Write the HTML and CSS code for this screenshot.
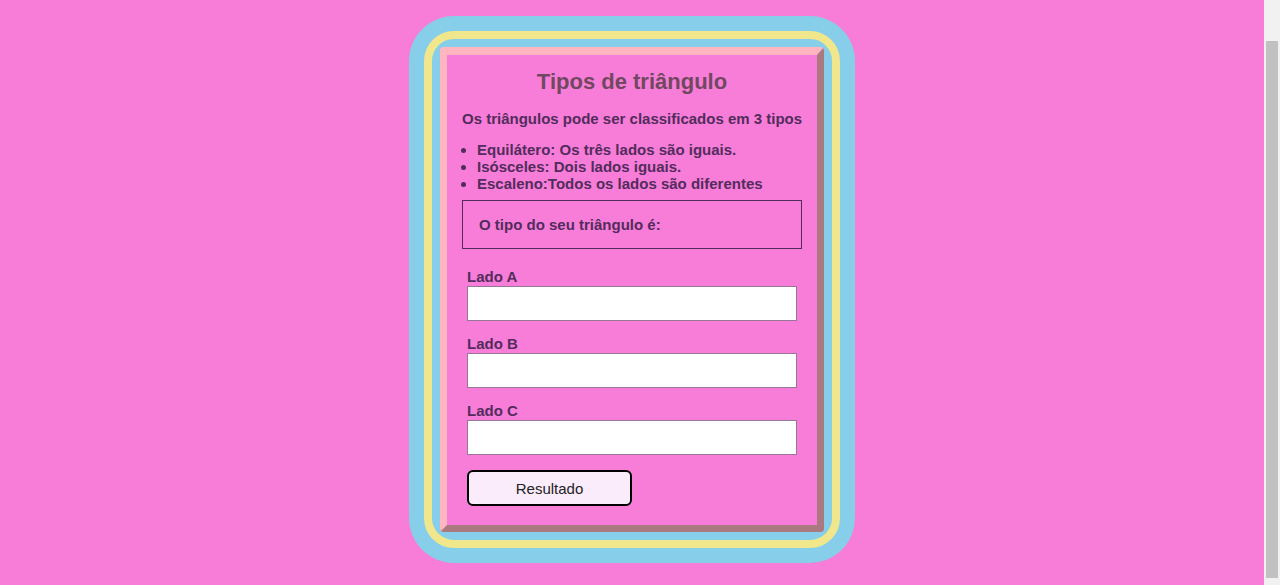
FILE: index.html
```html
<!DOCTYPE html>
<html lang="pt-br">
  <head>
    <meta charset="utf-8" />
    <meta name="viewport" content="width=device-width, initial-scale=1" />
    <title>Tipos de triângulo</title>
    <link rel="stylesheet" href="styles.css">
  </head>
  <body>
    <div class="moldura">
      <div class="faixa">
        <div class="cartao">
          <h1 class="titulo">Tipos de triângulo</h1>
          <p class="intro">Os triângulos pode ser classificados em 3 tipos</p>
          <ul class="tipos">
            <li>Equilátero: Os três lados são iguais.</li>
            <li>Isósceles: Dois lados iguais.</li>
            <li>Escaleno:Todos os lados são diferentes</li>
          </ul>
          <div class="resultado">O tipo do seu triângulo é:</div>
          <form class="formulario">
            <label for="ladoA">Lado A</label>
            <input type="number" id="ladoA" />
            <label for="ladoB">Lado B</label>
            <input type="number" id="ladoB" />
            <label for="ladoC">Lado C</label>
            <input type="number" id="ladoC" />
            <button type="button" class="botao">Resultado</button>
          </form>
        </div>
      </div>
    </div>
    <div class="rolagem" aria-hidden="true"><div class="rolagem__barra"></div></div>
  </body>
</html>
```

FILE: styles.css
```css
:root {
  --rosa: rgb(248, 125, 216);
  --azul: rgb(135, 206, 235);
  --amarelo: rgb(240, 230, 140);
  --rosa-claro: rgb(255, 182, 193);
  --texto: rgb(82, 44, 92);
  --titulo: rgb(112, 72, 96);
}

html {
  background: var(--rosa);
}

body {
  margin: 0;
  padding: 16px 16px 23px 0;
  font-family: "Liberation Sans", Arial, sans-serif;
  color: var(--texto);
}

.moldura {
  width: 416px;
  margin: 0 auto;
  padding: 15px;
  background: var(--azul);
  border-radius: 45px;
}
.faixa {
  padding: 8px;
  border: 8px solid var(--amarelo);
  border-radius: 30px;
  background: var(--azul);
}
.cartao {
  padding: 0 15px 19px;
  border: 7px outset var(--rosa-claro);
  border-top-width: 8px;
  border-radius: 4px;
  background: var(--rosa);
  font-size: 15px;
  font-weight: bold;
}

.titulo {
  margin: 14px 0 16px;
  font-size: 22px;
  line-height: 25px;
  text-align: center;
  color: var(--titulo);
}
.intro {
  margin: 0 0 14px;
  line-height: 17px;
  white-space: nowrap;
}
.tipos {
  margin: 0 0 8px;
  padding-left: 15px;
  line-height: 17px;
}

.resultado {
  padding: 15px 16px;
  border: 1px solid var(--texto);
  line-height: 17px;
}

.formulario {
  display: flex;
  flex-direction: column;
  align-items: flex-start;
  padding: 19px 5px 0;
}
.formulario label {
  line-height: 17px;
}
.formulario input {
  box-sizing: border-box;
  width: 330px;
  height: 35px;
  margin: 1px 0 14px;
  border: 1px solid rgb(150, 120, 150);
  background: #fff;
}
.botao {
  width: 165px;
  height: 36px;
  margin-top: 1px;
  border: 2px solid #000;
  border-radius: 6px;
  background: rgb(251, 236, 252);
  font-family: "Liberation Sans", Arial, sans-serif;
  font-size: 15px;
  color: #222;
}

/* imitação da barra de rolagem do navegador */
.rolagem {
  position: fixed;
  top: 0;
  right: 0;
  width: 16px;
  height: 100%;
  padding: 41px 2px 7px;
  box-sizing: border-box;
  background: rgb(241, 241, 241);
}
.rolagem__barra {
  height: 100%;
  background: rgb(193, 193, 193);
}
```
